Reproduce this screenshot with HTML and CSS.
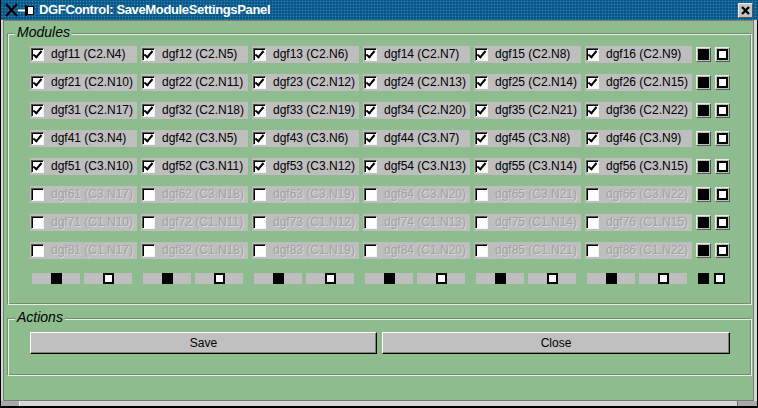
FILE: index.html
```html
<!DOCTYPE html>
<html>
<head>
<meta charset="utf-8">
<link rel="stylesheet" href="styles.css">
</head>
<body>
<div class="window">
  <div class="titlebar">
    <svg class="wm-icons" width="34" height="20" viewBox="0 0 34 20">
      <path d="M4 4 L15 16 M15 4 L4 16" stroke="#000" stroke-width="2.2" fill="none"/>
      <path d="M16 10.5 H23" stroke="#fff" stroke-width="2"/>
      <rect x="23" y="5" width="2" height="11" fill="#000"/>
      <rect x="25.5" y="6.5" width="6" height="8" fill="#fff" stroke="#000" stroke-width="1"/>
    </svg>
    <span class="title">DGFControl: SaveModuleSettingsPanel</span>
    <div class="closebtn">
      <svg width="11" height="11" viewBox="0 0 11 11"><path d="M2 2 L9 9 M9 2 L2 9" stroke="#000" stroke-width="2.4"/></svg>
    </div>
  </div>
  <div class="frame">
    <div class="client">
      <div class="group modules">
        <span class="legend">Modules</span>
        <div class="grid">
          <div class="cell"><span class="cb on"></span><span class="lbl">dgf11 (C2.N4)</span></div>
          <div class="cell"><span class="cb on"></span><span class="lbl">dgf12 (C2.N5)</span></div>
          <div class="cell"><span class="cb on"></span><span class="lbl">dgf13 (C2.N6)</span></div>
          <div class="cell"><span class="cb on"></span><span class="lbl">dgf14 (C2.N7)</span></div>
          <div class="cell"><span class="cb on"></span><span class="lbl">dgf15 (C2.N8)</span></div>
          <div class="cell"><span class="cb on"></span><span class="lbl">dgf16 (C2.N9)</span></div>
          <div class="sq"><span class="blk"></span></div><div class="sq"><span class="wht"></span></div>

          <div class="cell"><span class="cb on"></span><span class="lbl">dgf21 (C2.N10)</span></div>
          <div class="cell"><span class="cb on"></span><span class="lbl">dgf22 (C2.N11)</span></div>
          <div class="cell"><span class="cb on"></span><span class="lbl">dgf23 (C2.N12)</span></div>
          <div class="cell"><span class="cb on"></span><span class="lbl">dgf24 (C2.N13)</span></div>
          <div class="cell"><span class="cb on"></span><span class="lbl">dgf25 (C2.N14)</span></div>
          <div class="cell"><span class="cb on"></span><span class="lbl">dgf26 (C2.N15)</span></div>
          <div class="sq"><span class="blk"></span></div><div class="sq"><span class="wht"></span></div>

          <div class="cell"><span class="cb on"></span><span class="lbl">dgf31 (C2.N17)</span></div>
          <div class="cell"><span class="cb on"></span><span class="lbl">dgf32 (C2.N18)</span></div>
          <div class="cell"><span class="cb on"></span><span class="lbl">dgf33 (C2.N19)</span></div>
          <div class="cell"><span class="cb on"></span><span class="lbl">dgf34 (C2.N20)</span></div>
          <div class="cell"><span class="cb on"></span><span class="lbl">dgf35 (C2.N21)</span></div>
          <div class="cell"><span class="cb on"></span><span class="lbl">dgf36 (C2.N22)</span></div>
          <div class="sq"><span class="blk"></span></div><div class="sq"><span class="wht"></span></div>

          <div class="cell"><span class="cb on"></span><span class="lbl">dgf41 (C3.N4)</span></div>
          <div class="cell"><span class="cb on"></span><span class="lbl">dgf42 (C3.N5)</span></div>
          <div class="cell"><span class="cb on"></span><span class="lbl">dgf43 (C3.N6)</span></div>
          <div class="cell"><span class="cb on"></span><span class="lbl">dgf44 (C3.N7)</span></div>
          <div class="cell"><span class="cb on"></span><span class="lbl">dgf45 (C3.N8)</span></div>
          <div class="cell"><span class="cb on"></span><span class="lbl">dgf46 (C3.N9)</span></div>
          <div class="sq"><span class="blk"></span></div><div class="sq"><span class="wht"></span></div>

          <div class="cell"><span class="cb on"></span><span class="lbl">dgf51 (C3.N10)</span></div>
          <div class="cell"><span class="cb on"></span><span class="lbl">dgf52 (C3.N11)</span></div>
          <div class="cell"><span class="cb on"></span><span class="lbl">dgf53 (C3.N12)</span></div>
          <div class="cell"><span class="cb on"></span><span class="lbl">dgf54 (C3.N13)</span></div>
          <div class="cell"><span class="cb on"></span><span class="lbl">dgf55 (C3.N14)</span></div>
          <div class="cell"><span class="cb on"></span><span class="lbl">dgf56 (C3.N15)</span></div>
          <div class="sq"><span class="blk"></span></div><div class="sq"><span class="wht"></span></div>

          <div class="cell off"><span class="cb"></span><span class="lbl">dgf61 (C3.N17)</span></div>
          <div class="cell off"><span class="cb"></span><span class="lbl">dgf62 (C3.N18)</span></div>
          <div class="cell off"><span class="cb"></span><span class="lbl">dgf63 (C3.N19)</span></div>
          <div class="cell off"><span class="cb"></span><span class="lbl">dgf64 (C3.N20)</span></div>
          <div class="cell off"><span class="cb"></span><span class="lbl">dgf65 (C3.N21)</span></div>
          <div class="cell off"><span class="cb"></span><span class="lbl">dgf66 (C3.N22)</span></div>
          <div class="sq"><span class="blk"></span></div><div class="sq"><span class="wht"></span></div>

          <div class="cell off"><span class="cb"></span><span class="lbl">dgf71 (C1.N10)</span></div>
          <div class="cell off"><span class="cb"></span><span class="lbl">dgf72 (C1.N11)</span></div>
          <div class="cell off"><span class="cb"></span><span class="lbl">dgf73 (C1.N12)</span></div>
          <div class="cell off"><span class="cb"></span><span class="lbl">dgf74 (C1.N13)</span></div>
          <div class="cell off"><span class="cb"></span><span class="lbl">dgf75 (C1.N14)</span></div>
          <div class="cell off"><span class="cb"></span><span class="lbl">dgf76 (C1.N15)</span></div>
          <div class="sq"><span class="blk"></span></div><div class="sq"><span class="wht"></span></div>

          <div class="cell off"><span class="cb"></span><span class="lbl">dgf81 (C1.N17)</span></div>
          <div class="cell off"><span class="cb"></span><span class="lbl">dgf82 (C1.N18)</span></div>
          <div class="cell off"><span class="cb"></span><span class="lbl">dgf83 (C1.N19)</span></div>
          <div class="cell off"><span class="cb"></span><span class="lbl">dgf84 (C1.N20)</span></div>
          <div class="cell off"><span class="cb"></span><span class="lbl">dgf85 (C1.N21)</span></div>
          <div class="cell off"><span class="cb"></span><span class="lbl">dgf86 (C1.N22)</span></div>
          <div class="sq"><span class="blk"></span></div><div class="sq"><span class="wht"></span></div>

          <div class="bars"><div class="bar"><span class="blk"></span></div><div class="bar"><span class="wht"></span></div></div>
          <div class="bars"><div class="bar"><span class="blk"></span></div><div class="bar"><span class="wht"></span></div></div>
          <div class="bars"><div class="bar"><span class="blk"></span></div><div class="bar"><span class="wht"></span></div></div>
          <div class="bars"><div class="bar"><span class="blk"></span></div><div class="bar"><span class="wht"></span></div></div>
          <div class="bars"><div class="bar"><span class="blk"></span></div><div class="bar"><span class="wht"></span></div></div>
          <div class="bars"><div class="bar"><span class="blk"></span></div><div class="bar"><span class="wht"></span></div></div>
          <div class="tail"><span class="blk"></span><span class="wht"></span></div>
        </div>
      </div>
      <div class="group actions">
        <span class="legend">Actions</span>
        <div class="buttons">
          <button class="btn">Save</button>
          <button class="btn">Close</button>
        </div>
      </div>
    </div>
    <div class="strip"><span class="corner left"></span><span class="edge"></span><span class="corner right"></span></div>
  </div>
</div>
</body>
</html>
```

FILE: styles.css
```css
* { box-sizing: border-box; }
html, body { margin: 0; padding: 0; }
body {
  font-family: "Liberation Sans", Arial, sans-serif;
  font-size: 12px;
  color: #000;
  background: #8fbc8f;
}
.window {
  width: 758px;
  height: 408px;
  display: flex;
  flex-direction: column;
  overflow: hidden;
}
.titlebar {
  flex: none;
  height: 20px;
  display: flex;
  align-items: center;
  background-color: #0a5786;
  background-image: radial-gradient(circle, #2a86bc 0.7px, transparent 1.1px);
  background-size: 3px 3px;
  border-left: 1px solid #000;
}
.wm-icons { flex: none; margin-left: 1px; }
.title {
  color: #fff;
  font-weight: bold;
  font-size: 13px;
  letter-spacing: -0.35px;
  margin-left: 3px;
  line-height: 20px;
}
.closebtn {
  margin-left: auto;
  margin-right: 5px;
  width: 15px;
  height: 15px;
  background: #c4c4c4;
  border: 1px solid;
  border-color: #f0f0f0 #555 #555 #f0f0f0;
  display: flex;
  align-items: center;
  justify-content: center;
}
.frame {
  flex: 1;
  display: flex;
  flex-direction: column;
  background: #d6d6d6;
  border: 1px solid #000;
  border-top: none;
  border-bottom-width: 2px;
  padding: 0 3px 0 2px;
}
.client {
  flex: 1;
  background: #8fbc8f;
  border: 1px solid #7a7a7a;
  padding: 12px 1px 0 3px;
}
.strip {
  flex: none;
  height: 5px;
  display: flex;
  margin: 0 -3px 0 -2px;
}
.strip .corner { width: 19px; background: #a9a9a9; }
.strip .corner.left { border-right: 1px solid #f2f2f2; }
.strip .corner.right { width: 20px; border-left: 1px solid #6e6e6e; }
.strip .edge { flex: 1; }

.group {
  position: relative;
  border: 1px solid;
  border-color: #6f8f6f #e4eee4 #e4eee4 #6f8f6f;
  box-shadow: inset 1px 1px #e4eee4, inset -1px -1px #6f8f6f;
}
.legend {
  position: absolute;
  top: -10px;
  left: 7px;
  padding: 0 2px;
  background: #8fbc8f;
  font-style: italic;
  font-size: 14px;
  line-height: 16px;
}
.modules {
  padding: 12px 0 17px 22px;
}
.grid {
  display: grid;
  grid-template-columns: repeat(6, 107px) 15px 15px;
  grid-auto-rows: 17px;
  column-gap: 4px;
  row-gap: 11px;
}
.cell {
  display: flex;
  align-items: center;
  background: #bebebe;
  padding-left: 1px;
  white-space: nowrap;
}
.cb {
  position: relative;
  flex: none;
  width: 13px;
  height: 13px;
  background: #fff;
  border: 1px solid;
  border-color: #555 #f4f4f4 #f4f4f4 #555;
  box-shadow: inset 1px 1px #000;
  margin-right: 7px;
}
.cb.on::after {
  content: "";
  position: absolute;
  left: 3px;
  top: 0px;
  width: 3px;
  height: 7px;
  border: solid #000;
  border-width: 0 2px 2px 0;
  transform: rotate(40deg);
}
.lbl { line-height: 17px; }
.cell.off .lbl { color: #a2a2a2; text-shadow: 1px 1px rgba(235,235,235,0.6); }

.sq {
  align-self: center;
  width: 15px;
  height: 15px;
  background: #bebebe;
  border: 1px solid;
  border-color: #ececec #5a5a5a #5a5a5a #ececec;
  padding: 1px;
  display: flex;
}
.sq .blk { flex: 1; background: #000; }
.sq .wht { flex: 1; background: #fff; border: 2px solid #000; }

.bars {
  display: flex;
  align-items: center;
  gap: 4px;
  padding-left: 2px;
}
.bar {
  width: 48px;
  height: 11px;
  background: #bebebe;
  display: flex;
  justify-content: center;
}
.blk { display: block; width: 11px; height: 11px; background: #000; }
.wht { display: block; width: 11px; height: 11px; background: #fff; border: 2px solid #000; }
.tail {
  grid-column: span 2;
  display: flex;
  align-items: center;
  gap: 5px;
  padding-left: 2px;
}

.actions {
  margin-top: 13px;
  padding: 13px 0 21px 22px;
}
.buttons {
  display: grid;
  grid-template-columns: 347px 348px;
  column-gap: 5px;
}
.btn {
  height: 22px;
  margin: 0;
  padding: 0;
  font-family: "Liberation Sans", Arial, sans-serif;
  font-size: 12px;
  color: #000;
  background: #c0c0c0;
  border: 1px solid;
  border-color: #fff #000 #000 #fff;
  box-shadow: inset -1px -1px #7e7e7e;
  border-radius: 0;
}
```
